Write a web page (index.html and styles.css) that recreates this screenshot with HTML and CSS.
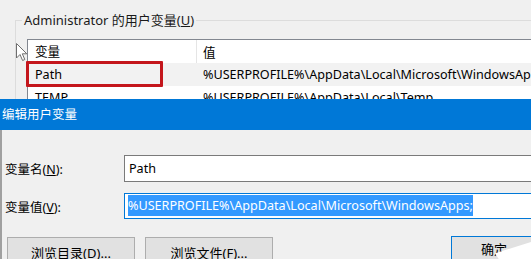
FILE: index.html
```html
<!DOCTYPE html>
<html>
<head>
<meta charset="utf-8">
<link rel="stylesheet" href="styles.css">
</head>
<body>
<div class="screen">
  <section class="behind">
    <fieldset class="group">
      <legend class="legend">Administrator 的用户变量(<u>U</u>)</legend>
      <div class="listview">
        <div class="row head"><span class="c1">变量</span><span class="c2">值</span></div>
        <div class="row sel"><span class="c1">Path</span><span class="c2">%USERPROFILE%\AppData\Local\Microsoft\WindowsApps;</span></div>
        <div class="row"><span class="c1">TEMP</span><span class="c2">%USERPROFILE%\AppData\Local\Temp</span></div>
        <div class="redbox"></div>
      </div>
    </fieldset>
    <svg class="cursor" width="13" height="20" viewBox="0 0 13 20"><path d="M1.5 1.5 L1.5 16 L5 12.5 L7.6 18.5 L9.8 17.5 L7.3 11.8 L11.8 11.8 Z" fill="#fff" stroke="#6e6e6e" stroke-width="1" stroke-linejoin="round"/></svg>
  </section>
  <section class="dialog">
    <div class="titlebar">编辑用户变量</div>
    <div class="body">
      <div class="form">
        <label class="lbl">变量名(<u>N</u>):</label>
        <div class="input">Path</div>
        <label class="lbl">变量值(<u>V</u>):</label>
        <div class="input focus"><span class="hl">%USERPROFILE%\AppData\Local\Microsoft\WindowsApps;</span></div>
      </div>
      <div class="buttons">
        <div class="btn">浏览目录(<u>D</u>)...</div>
        <div class="btn">浏览文件(<u>F</u>)...</div>
        <div class="btn default">确定</div>
      </div>
    </div>
    <div class="wedge"></div>
  </section>
</div>
</body>
</html>
```
FILE: styles.css
```css
* { box-sizing: border-box; }
html, body { margin: 0; padding: 0; }
body {
  width: 531px;
  height: 259px;
  overflow: hidden;
  background: #f0f0f0;
  font-family: "Segoe UI", "Noto Sans", "Noto Sans CJK SC", sans-serif;
  font-size: 12px;
  color: #000;
}
u { text-decoration: underline; text-underline-offset: 1px; }
.screen { width: 531px; height: 259px; overflow: hidden; position: relative; }

.behind {
  height: 99px;
  overflow: hidden;
  position: relative;
  padding-top: 20px;
}
.group {
  margin: 0 0 0 15px;
  padding: 0 0 0 11px;
  border: none;
  border-top: 1px solid #dcdcdc;
  border-left: 1px solid #dcdcdc;
  height: 120px;
  position: relative;
}
.legend {
  position: absolute;
  top: -11px;
  left: 6px;
  padding: 0 2px;
  background: #f0f0f0;
  font-size: 13px;
  line-height: 20px;
  color: #1a1a1a;
}
.listview {
  margin-top: 18px;
  background: #fff;
  border-top: 1px solid #828790;
  border-left: 1px solid #828790;
  position: relative;
  height: 100px;
}
.row {
  display: flex;
  height: 23px;
  align-items: center;
  font-size: 12.6px;
  white-space: nowrap;
}
.row .c1 { width: 169px; padding-left: 7px; flex: none; }
.row .c2 { padding-left: 6px; }
.head .c1 { border-right: 1px solid #e5e5e5; height: 23px; line-height: 23px; }
.sel { background: #f2f2f2; }
.redbox {
  position: absolute;
  left: -2px;
  top: 21px;
  width: 137px;
  height: 26px;
  border: 3px solid #c4161c;
  border-radius: 1px;
}
.cursor { position: absolute; left: 15px; top: 42px; }

.dialog { position: relative; }
.titlebar {
  height: 31px;
  background: #0078d7;
  color: #fff;
  font-size: 12.5px;
  line-height: 31px;
  padding-left: 2px;
}
.body {
  border-left: 2px solid #a0a0a0;
  height: 140px;
  padding: 25px 0 0 3px;
}
.form {
  display: grid;
  grid-template-columns: 119px 420px;
  row-gap: 11px;
  align-items: center;
}
.lbl { font-size: 12.5px; }
.input {
  height: 27px;
  background: #fff;
  border: 1px solid #7a7a7a;
  padding-left: 4px;
  font-size: 12.6px;
  line-height: 25px;
  white-space: nowrap;
}
.input.focus { border-color: #0078d7; height: 26px; line-height: 24px; padding-left: 3px; }
.hl { background: #3399ff; color: #fff; padding: 2px 0; }
.buttons {
  display: flex;
  gap: 10px;
  margin-top: 18px;
  padding-left: 2px;
}
.btn {
  flex: none;
  width: 128px;
  height: 32px;
  border: 1px solid #adadad;
  background: #e1e1e1;
  text-align: center;
  font-size: 13px;
  line-height: 30px;
}
.btn.default {
  width: 86px;
  margin-left: 168px;
  border-color: #0078d7;
  margin-top: -1px;
  line-height: 24px;
}
.wedge {
  position: absolute;
  right: 0;
  bottom: 0;
  width: 36px;
  height: 28px;
  background: #fff;
  clip-path: polygon(0 40%, 100% 0, 100% 100%, 30% 100%);
}
```
